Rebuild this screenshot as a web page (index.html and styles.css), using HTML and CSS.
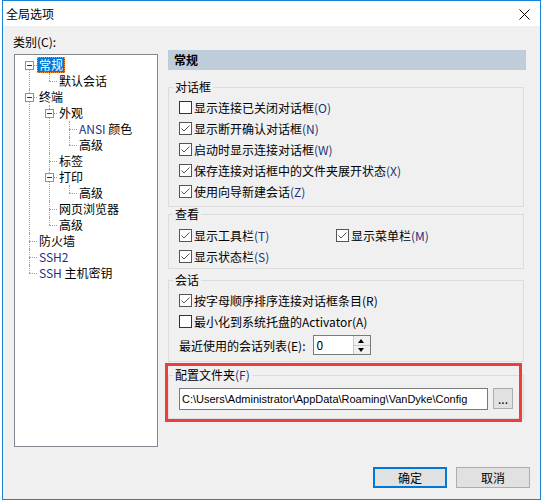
FILE: index.html
```html
<!DOCTYPE html>
<html lang="zh-CN">
<head>
    <meta charset="UTF-8">
    <title>全局选项</title>
    <link rel="stylesheet" href="styles.css">
</head>
<body>
    <div class="window">
        <div class="titlebar">
            <span class="title">全局选项</span>
            <svg class="close" width="11" height="11" viewBox="0 0 11 11">
                <path d="M0.5 0.5 L10.5 10.5 M10.5 0.5 L0.5 10.5" stroke="#000" stroke-width="1"/>
            </svg>
        </div>
        <div class="client">
            <div class="main">
                <div class="left">
                    <div class="cat-label">类别(C):</div>
                    <div class="tree">
                        <ul class="root">
                            <li>
                                <div class="row"><span class="tog"></span><span class="lbl sel">常规</span></div>
                                <ul>
                                    <li><div class="row leaf"><span class="lbl">默认会话</span></div></li>
                                </ul>
                            </li>
                            <li>
                                <div class="row"><span class="tog"></span><span class="lbl">终端</span></div>
                                <ul>
                                    <li>
                                        <div class="row"><span class="tog"></span><span class="lbl">外观</span></div>
                                        <ul>
                                            <li><div class="row leaf"><span class="lbl"><span class="lat">ANSI</span> 颜色</span></div></li>
                                            <li><div class="row leaf"><span class="lbl">高级</span></div></li>
                                        </ul>
                                    </li>
                                    <li><div class="row leaf"><span class="lbl">标签</span></div></li>
                                    <li>
                                        <div class="row"><span class="tog"></span><span class="lbl">打印</span></div>
                                        <ul>
                                            <li><div class="row leaf"><span class="lbl">高级</span></div></li>
                                        </ul>
                                    </li>
                                    <li><div class="row leaf"><span class="lbl">网页浏览器</span></div></li>
                                    <li><div class="row leaf"><span class="lbl">高级</span></div></li>
                                </ul>
                            </li>
                            <li><div class="row leaf"><span class="lbl">防火墙</span></div></li>
                            <li><div class="row leaf"><span class="lbl"><span class="lat">SSH2</span></span></div></li>
                            <li><div class="row leaf"><span class="lbl"><span class="lat">SSH</span> 主机密钥</span></div></li>
                        </ul>
                    </div>
                </div>

                <div class="right">
                    <div class="page-head">常规</div>

                    <fieldset class="group g-dialog">
                        <legend>对话框</legend>
                        <div class="check"><span class="box"></span>显示连接已关闭对话框<span class="k">(O)</span></div>
                        <div class="check"><span class="box on"><svg width="11" height="11" viewBox="0 0 11 11"><path d="M1.5 5.5 L4 8 L9.5 2.5" fill="none" stroke="#555" stroke-width="1"/></svg></span>显示断开确认对话框<span class="k">(N)</span></div>
                        <div class="check"><span class="box on"><svg width="11" height="11" viewBox="0 0 11 11"><path d="M1.5 5.5 L4 8 L9.5 2.5" fill="none" stroke="#555" stroke-width="1"/></svg></span>启动时显示连接对话框<span class="k">(W)</span></div>
                        <div class="check"><span class="box on"><svg width="11" height="11" viewBox="0 0 11 11"><path d="M1.5 5.5 L4 8 L9.5 2.5" fill="none" stroke="#555" stroke-width="1"/></svg></span>保存连接对话框中的文件夹展开状态<span class="k">(X)</span></div>
                        <div class="check"><span class="box on"><svg width="11" height="11" viewBox="0 0 11 11"><path d="M1.5 5.5 L4 8 L9.5 2.5" fill="none" stroke="#555" stroke-width="1"/></svg></span>使用向导新建会话<span class="k">(Z)</span></div>
                    </fieldset>

                    <fieldset class="group g-view">
                        <legend>查看</legend>
                        <div class="view-grid">
                            <div class="check"><span class="box on"><svg width="11" height="11" viewBox="0 0 11 11"><path d="M1.5 5.5 L4 8 L9.5 2.5" fill="none" stroke="#555" stroke-width="1"/></svg></span>显示工具栏<span class="k">(T)</span></div>
                            <div class="check"><span class="box on"><svg width="11" height="11" viewBox="0 0 11 11"><path d="M1.5 5.5 L4 8 L9.5 2.5" fill="none" stroke="#555" stroke-width="1"/></svg></span>显示菜单栏<span class="k">(M)</span></div>
                            <div class="check"><span class="box on"><svg width="11" height="11" viewBox="0 0 11 11"><path d="M1.5 5.5 L4 8 L9.5 2.5" fill="none" stroke="#555" stroke-width="1"/></svg></span>显示状态栏<span class="k">(S)</span></div>
                        </div>
                    </fieldset>

                    <fieldset class="group g-session">
                        <legend>会话</legend>
                        <div class="check"><span class="box on"><svg width="11" height="11" viewBox="0 0 11 11"><path d="M1.5 5.5 L4 8 L9.5 2.5" fill="none" stroke="#555" stroke-width="1"/></svg></span>按字母顺序排序连接对话框条目(R)</div>
                        <div class="check"><span class="box"></span>最小化到系统托盘的Activator(A)</div>
                        <div class="spin-row">
                            <span>最近使用的会话列表(E):</span>
                            <div class="spin">
                                <span class="spin-val">0</span>
                                <div class="spin-btns">
                                    <span class="arrow up"></span>
                                    <span class="arrow down"></span>
                                </div>
                            </div>
                        </div>
                    </fieldset>

                    <div class="folder-wrap">
                        <fieldset class="group g-folder">
                            <legend>配置文件夹<span class="k">(F)</span></legend>
                            <div class="folder-row">
                                <div class="textbox">C:\Users\Administrator\AppData\Roaming\VanDyke\Config</div>
                                <button class="browse">...</button>
                            </div>
                        </fieldset>
                    </div>
                </div>
            </div>

            <div class="footer">
                <button class="btn default">确定</button>
                <button class="btn">取消</button>
            </div>
        </div>
    </div>
</body>
</html>
```

FILE: styles.css
```css
body {
    margin: 0;
    background: #fff;
    font-family: "Noto Sans CJK SC", "Microsoft YaHei", sans-serif;
    font-size: 12px;
    color: #000;
}
.window {
    margin-left: 2px;
    width: 537px;
    height: 498px;
    border: 1px solid #1883d7;
    background: #f0f0f0;
}
.titlebar {
    height: 25px;
    background: #fff;
    display: flex;
    align-items: center;
    justify-content: space-between;
    padding: 0 10px 0 3px;
}
.title {
    font-size: 12px;
    line-height: 16px;
}
.close {
    display: block;
    margin-top: 1px;
}
.client {
    padding: 8px 10px 0 11px;
}
.main {
    display: flex;
    gap: 10px;
}
.left {
    width: 144px;
}
.cat-label {
    line-height: 16px;
    margin-left: -1px;
}
.tree {
    margin-top: 4px;
    height: 393px;
    box-sizing: border-box;
    border: 1px solid #828790;
    background: #fff;
    padding-top: 2px;
    overflow: hidden;
}
.tree ul {
    list-style: none;
    margin: 0;
    padding: 0;
}
.tree ul ul {
    padding-left: 20px;
}
.tree li {
    position: relative;
}
.tree li::before {
    content: '';
    position: absolute;
    left: 14px;
    top: 8px;
    width: 8px;
    border-top: 1px dotted #a0a0a0;
}
.tree li::after {
    content: '';
    position: absolute;
    left: 14px;
    top: 0;
    bottom: 0;
    border-left: 1px dotted #a0a0a0;
}
.tree li:last-child::after {
    bottom: auto;
    height: 8px;
}
.tree .root > li:first-child::after {
    top: 8px;
}
.row {
    display: flex;
    align-items: center;
    height: 16px;
    padding-left: 10px;
}
.row.leaf {
    padding-left: 22px;
}
.tog {
    position: relative;
    z-index: 1;
    width: 9px;
    height: 9px;
    box-sizing: border-box;
    border: 1px solid #919191;
    background: #fff;
    margin-right: 3px;
}
.tog::after {
    content: '';
    position: absolute;
    left: 1px;
    top: 3px;
    width: 5px;
    height: 1px;
    background: #22306a;
}
.lbl {
    line-height: 14px;
    padding: 0 1px;
    border: 1px solid transparent;
    white-space: nowrap;
}
.lbl.sel {
    background: #0078d7;
    color: #fff;
    border: 1px dotted #ff8c33;
}
.lat {
    color: #1f2f86;
}
.right {
    width: 358px;
    margin-top: 16px;
}
.page-head {
    height: 20px;
    line-height: 20px;
    background: #bfcddb;
    font-weight: bold;
    padding-left: 6px;
}
.group {
    border: 1px solid #dcdcdc;
    margin: 0 2px 0 0;
    padding: 0 0 4px 4px;
    min-width: 0;
}
.group legend {
    padding: 0 2px;
    line-height: 14px;
}
.k {
    color: #22307a;
}
.check {
    display: flex;
    align-items: center;
    height: 21px;
    margin-left: 6px;
    white-space: nowrap;
}
.box {
    width: 13px;
    height: 13px;
    box-sizing: border-box;
    border: 1px solid #333;
    background: #fff;
    margin-right: 2px;
    flex-shrink: 0;
}
.box.on {
    border-color: #555;
}
.box svg {
    display: block;
}
.g-dialog {
    margin-top: 10px;
    padding-top: 3px;
    padding-bottom: 4px;
}
.g-view {
    padding-top: 4px;
    padding-bottom: 1px;
}
.view-grid {
    display: grid;
    grid-template-columns: 157px 1fr;
}
.g-session {
    margin-top: 4px;
    padding-top: 3px;
    padding-bottom: 6px;
}
.spin-row {
    display: flex;
    align-items: center;
    gap: 7px;
    margin: 3px 0 0 6px;
    height: 20px;
}
.spin {
    display: flex;
    width: 58px;
    height: 20px;
    box-sizing: border-box;
    border: 1px solid #7a7a7a;
    background: #fff;
}
.spin-val {
    flex: 1;
    padding-left: 3px;
    line-height: 18px;
}
.spin-btns {
    width: 16px;
    display: flex;
    flex-direction: column;
    border-left: 1px solid #c8c8c8;
}
.arrow {
    flex: 1;
    background: #f0f0f0;
    border: 1px solid #c8c8c8;
    border-width: 0 0 1px 0;
    position: relative;
}
.arrow.down {
    border-bottom: 0;
}
.arrow::after {
    content: '';
    position: absolute;
    left: 4px;
    width: 0;
    height: 0;
    border-left: 3.5px solid transparent;
    border-right: 3.5px solid transparent;
}
.arrow.up::after {
    top: 3px;
    border-bottom: 4px solid #000;
}
.arrow.down::after {
    top: 2px;
    border-top: 4px solid #000;
}
.folder-wrap {
    position: relative;
    margin-top: 6px;
}
.folder-wrap::after {
    content: '';
    position: absolute;
    left: -3px;
    top: -5px;
    width: 357px;
    height: 59px;
    box-sizing: border-box;
    border: 3px solid #f03c3c;
}
.g-folder {
    padding-top: 6px;
    padding-bottom: 8px;
}
.folder-row {
    display: flex;
    margin-left: 6px;
    gap: 5px;
}
.textbox {
    width: 309px;
    height: 22px;
    box-sizing: border-box;
    border: 1px solid #7a7a7a;
    background: #fff;
    padding-left: 2px;
    font-family: "Liberation Sans", "Noto Sans CJK SC", sans-serif;
    font-size: 11px;
    line-height: 20px;
    white-space: nowrap;
    overflow: hidden;
}
.browse {
    width: 20px;
    height: 21px;
    box-sizing: border-box;
    border: 1px solid #adadad;
    background: #e1e1e1;
    font-family: inherit;
    font-size: 12px;
    padding: 0;
    line-height: 16px;
}
.footer {
    display: flex;
    justify-content: flex-end;
    gap: 9px;
    margin-top: 20px;
}
.btn {
    width: 74px;
    height: 21px;
    box-sizing: border-box;
    border: 1px solid #adadad;
    background: #e1e1e1;
    font-family: inherit;
    font-size: 12px;
    padding: 0;
    color: #000;
}
.btn.default {
    border: 2px solid #0078d7;
}
```
